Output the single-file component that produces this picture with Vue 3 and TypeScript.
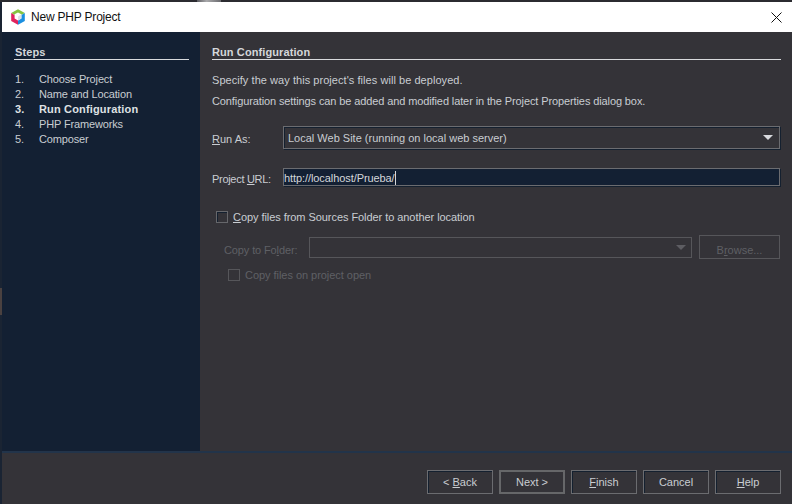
<script setup lang="ts">
const steps = [
  { n: "1.", label: "Choose Project" },
  { n: "2.", label: "Name and Location" },
  { n: "3.", label: "Run Configuration", current: true },
  { n: "4.", label: "PHP Frameworks" },
  { n: "5.", label: "Composer" },
];
</script>

<template>
  <div class="window">
    <!-- bits of the desktop showing behind the dialog edge -->
    <i class="peek peek-top"></i>
    <i class="peek peek-left"></i>

    <header class="titlebar">
      <svg class="logo" width="16" height="16" viewBox="0 0 16 16">
        <path d="M8 0.3 14.8 4.1 8 8 1.2 4.1Z" fill="#86c440" />
        <path d="M1.2 4.1 8 8v7.7L1.2 11.9Z" fill="#e0245e" />
        <path d="M14.8 4.1V11.9L8 15.7V8Z" fill="#1b8fe0" />
        <path d="M8 3.4 11.4 5.3V9.5L8 11.4 4.6 9.5V5.3Z" fill="#fff" />
        <path d="M8 7.4 11.4 5.3V9.5L8 11.4Z" fill="#dfe3e6" />
      </svg>
      <span class="title">New PHP Project</span>
      <svg class="close" width="11" height="11" viewBox="0 0 11 11">
        <path d="M.5.5l10 10M10.5.5l-10 10" stroke="#111" stroke-width="1" fill="none" />
      </svg>
    </header>

    <div class="body">
      <aside class="steps">
        <h2 class="heading">Steps</h2>
        <ol class="step-list">
          <li v-for="s in steps" :key="s.n" :class="{ current: s.current }">
            <span class="num">{{ s.n }}</span>{{ s.label }}
          </li>
        </ol>
      </aside>

      <main class="content">
        <h2 class="heading">Run Configuration</h2>
        <p class="intro first">Specify the way this project's files will be deployed.</p>
        <p class="intro second">Configuration settings can be added and modified later in the Project Properties dialog box.</p>

        <div class="form-row run-as">
          <label class="row-label"><u>R</u>un As:</label>
          <div class="combo">
            <span>Local Web Site (running on local web server)</span>
            <i class="arrow"></i>
          </div>
        </div>

        <div class="form-row url">
          <label class="row-label"><span class="tight">Project <u>U</u>RL:</span></label>
          <div class="field"><span class="url-text">http://localhost/Prueba/</span><i class="caret"></i></div>
        </div>

        <label class="check main-check">
          <i class="box"></i>
          <span><u>C</u>opy files from Sources Folder to another location</span>
        </label>

        <div class="form-row folder">
          <label class="row-label muted">Copy to Fo<u>l</u>der:</label>
          <div class="combo off"><i class="arrow"></i></div>
          <button class="btn browse" disabled>B<u>r</u>owse...</button>
        </div>

        <label class="check sub-check muted">
          <i class="box"></i>
          <span>Copy files on project open</span>
        </label>
      </main>
    </div>

    <footer class="footer">
      <button class="btn">&lt; <u>B</u>ack</button>
      <button class="btn default">Next &gt;</button>
      <button class="btn"><u>F</u>inish</button>
      <button class="btn">Cancel</button>
      <button class="btn"><u>H</u>elp</button>
    </footer>
  </div>
</template>

<style>
html,
body {
  margin: 0;
  background: #1d2632;
}
</style>

<style scoped>
.window {
  position: relative;
  box-sizing: border-box;
  width: 792px;
  height: 504px;
  padding: 2px 0 0 2px;
  display: flex;
  flex-direction: column;
  overflow: hidden;
  background: linear-gradient(#2b2b30, #2b2b30 2px, #1a2433 2px);
  font-family: "Liberation Sans", Arial, sans-serif;
  font-size: 11px;
  color: #c9cdd2;
}

.peek {
  position: absolute;
}
.peek-top {
  left: 197px;
  top: 0;
  width: 24px;
  height: 2px;
  background: linear-gradient(90deg, #5b5b60, #a9a9ab 40%, #6a6a6e);
}
.peek-left {
  left: 0;
  top: 288px;
  width: 2px;
  height: 27px;
  background: #4a4140;
}

.titlebar {
  flex: none;
  height: 30px;
  display: flex;
  align-items: center;
  padding: 0 10px 0 8px;
  background: #fff;
  color: #111;
}
.logo {
  flex: none;
}
.title {
  margin-left: 5px;
  font-size: 12px;
  letter-spacing: -0.2px;
}
.close {
  margin-left: auto;
}

.body {
  flex: 1;
  display: flex;
  min-height: 0;
}

.steps {
  flex: none;
  box-sizing: border-box;
  width: 198px;
  padding: 13px 11px 0 12px;
  background: #132033;
}
.heading {
  margin: 0;
  height: 14px;
  border-bottom: 1px solid #d8dadd;
  font-size: 11px;
  line-height: 14px;
  font-weight: 700;
  letter-spacing: 0.1px;
  color: #d4d7da;
}
.steps .heading {
  padding-left: 1px;
}
.step-list {
  list-style: none;
  margin: 12px 0 0;
  padding: 0 0 0 1px;
  line-height: 15px;
  letter-spacing: -0.15px;
}
.num {
  display: inline-block;
  width: 24px;
}
.current {
  font-weight: 700;
  letter-spacing: 0.16px;
  color: #dfe1e4;
}

.content {
  flex: 1;
  min-width: 0;
  padding: 13px 11px 0 12px;
  background: #343338;
}
.intro {
  margin: 5px 0 0;
  line-height: 16px;
}
.intro.first {
  margin-top: 12px;
  letter-spacing: 0.05px;
}
.intro.second {
  letter-spacing: -0.11px;
}

.form-row {
  display: flex;
  align-items: center;
  margin-right: 1px;
}
.row-label {
  flex: none;
  width: 71px;
  padding-top: 3px;
}
.tight {
  letter-spacing: -0.3px;
}
.run-as {
  margin-top: 17px;
}
.url {
  margin-top: 19px;
}
.combo {
  flex: 1;
  box-sizing: border-box;
  height: 23px;
  display: flex;
  align-items: center;
  justify-content: space-between;
  padding: 0 5px 0 4px;
  border: 1px solid #6b6c70;
  box-shadow: 1px 1px 0 #14202f, inset 1px 1px 0 #14202f;
}
.arrow {
  width: 0;
  height: 0;
  border: 5px solid transparent;
  border-top: 5px solid #d8dade;
  border-bottom: 0;
  margin-right: 1px;
}
.field {
  flex: 1;
  box-sizing: border-box;
  height: 18px;
  display: flex;
  align-items: center;
  padding-top: 1px;
  background: #132033;
  border: 1px solid #6b6c70;
  box-shadow: 1px 1px 0 #14202f;
  color: #d4d7da;
}
.url-text {
  letter-spacing: -0.08px;
}
.caret {
  width: 1px;
  height: 14px;
  background: #d4d7da;
}

.check {
  display: flex;
  align-items: center;
}
.box {
  flex: none;
  box-sizing: border-box;
  width: 12px;
  height: 12px;
  border: 1px solid #66676b;
  margin-right: 5px;
}
.main-check {
  margin: 25px 0 0 4px;
  letter-spacing: -0.06px;
}
.main-check .box {
  box-shadow: inset 1px 1px 0 #14202f;
}

.folder {
  margin-top: 12px;
  padding-left: 12px;
}
.folder .row-label {
  width: 85px;
  padding-top: 5px;
  letter-spacing: -0.12px;
}
.combo.off {
  height: 21px;
  border-color: #56565a;
  box-shadow: none;
  justify-content: flex-end;
}
.combo.off .arrow {
  border-top-color: #5d5d62;
  margin-right: 0;
}
.muted {
  color: #5f6065;
}
.sub-check {
  margin: 10px 0 0 16px;
  letter-spacing: -0.04px;
}
.sub-check .box {
  border-color: #56565a;
}

.btn {
  box-sizing: border-box;
  width: 66px;
  height: 24px;
  padding: 0;
  font: inherit;
  color: #c9cdd2;
  background: transparent;
  border: 1px solid #6b6c70;
  box-shadow: inset 1px 1px 0 #14202f;
}
.btn.default {
  border-width: 2px;
  border-color: #666769;
  box-shadow: none;
}
.browse {
  flex: none;
  width: 81px;
  height: 24px;
  margin-left: 7px;
  padding-top: 5px;
  color: #5f6065;
  border-color: #56565a;
  box-shadow: none;
}

.footer {
  flex: none;
  box-sizing: border-box;
  height: 53px;
  display: flex;
  justify-content: flex-end;
  gap: 6px;
  padding: 17px 11px 0 0;
  background: #343338;
  border-top: 2px solid #22344a;
}
</style>
